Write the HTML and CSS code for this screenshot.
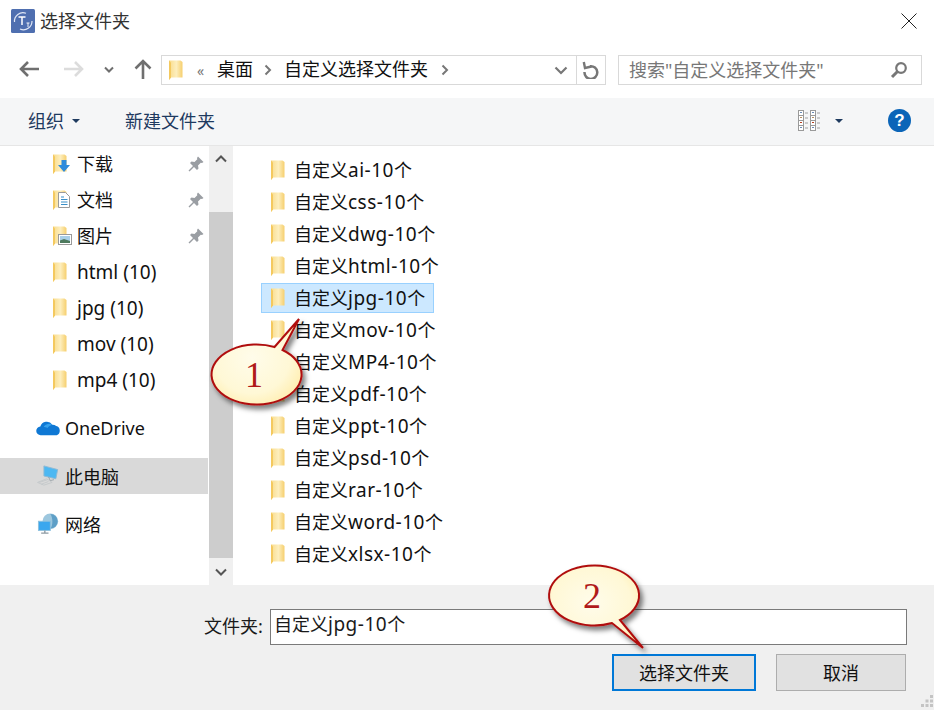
FILE: index.html
```html
<!DOCTYPE html>
<html lang="zh-CN">
<head>
<meta charset="utf-8">
<title>选择文件夹</title>
<link rel="stylesheet" href="styles.css">
</head>
<body>
<svg class="defs" width="0" height="0">
  <defs>
    <linearGradient id="fg" x1="0" x2="1" y1="0" y2="0">
      <stop offset="0" stop-color="#f9dc8c"/><stop offset=".55" stop-color="#fdeebd"/><stop offset="1" stop-color="#f6cf6e"/>
    </linearGradient>
    <radialGradient id="bubble" cx=".45" cy=".45" r=".6">
      <stop offset="0" stop-color="#fffcea"/><stop offset=".7" stop-color="#fff8d6"/><stop offset="1" stop-color="#ffefb4"/>
    </radialGradient>
    <filter id="sh" x="-20%" y="-20%" width="150%" height="150%"><feDropShadow dx="3" dy="4" stdDeviation="2.500" flood-color="#000" flood-opacity=".5"/></filter>
    <symbol id="folder" viewBox="0 0 16 22">
      <path d="M1 1.500h11.500l2 1.500v15.500l-11.500 0-2 2.500z" fill="url(#fg)"/>
      <path d="M1 1.500v19.500l2-2.500v-15z" fill="#f4c95f"/>
    </symbol>
    <symbol id="pin" viewBox="0 0 16 16">
      <path d="M10 .5L15.500 6 14 7l-1.200-.3L10 9.500l.5 3L9 14l-3-3-4.500 4.500-1-1L5 10 2 7l1.500-1.500 3 .5 2.800-2.800L9 2z" fill="#9a9ea3"/>
    </symbol>
  </defs>
</svg>
<div class="dialog">
  <header class="titlebar">
    <div class="title-left">
      <svg class="app-icon" viewBox="0 0 24 24"><rect width="24" height="24" rx="1.500" fill="#4f6fb0"/><path d="M3.500 13A8.500 8.500 0 0 1 15 4.300" fill="none" stroke="#dfe6f5" stroke-width="1.200"/><path d="M21 12a8.500 8.500 0 0 1-12 8" fill="none" stroke="#dfe6f5" stroke-width="1.200"/><path d="M7.500 8h7M11 8v8" stroke="#fff" stroke-width="1.500" fill="none"/><path d="M15.500 14h3M17 14v4" stroke="#fff" stroke-width=".9" fill="none"/></svg>
      <span class="title-text">选择文件夹</span>
    </div>
    <svg class="close" viewBox="0 0 16 16"><path d="M.5.5l15 15M15.500.5l-15 15" stroke="#222" stroke-width="1" fill="none"/></svg>
  </header>

  <nav class="navbar">
    <div class="nav-buttons">
      <svg class="nav-arrow" viewBox="0 0 20 18"><path d="M9 2L2 9l7 7M2 9h18" fill="none" stroke="#6f6f6f" stroke-width="2.600"/></svg>
      <svg class="nav-arrow fwd" viewBox="0 0 20 18"><path d="M11 2l7 7-7 7M18 9H0" fill="none" stroke="#dcdcdc" stroke-width="2.600"/></svg>
      <svg class="nav-chev" viewBox="0 0 10 7"><path d="M1 1.500l4 4 4-4" fill="none" stroke="#6f6f6f" stroke-width="2"/></svg>
      <svg class="nav-up" viewBox="0 0 18 20"><path d="M1.500 9.500L9 2l7.500 7.500M9 2v18" fill="none" stroke="#6f6f6f" stroke-width="2.600"/></svg>
    </div>
    <div class="address">
      <svg class="addr-folder"><use href="#folder"/></svg>
      <span class="crumb-more">«</span>
      <span class="crumb first">桌面</span>
      <svg class="crumb-sep" viewBox="0 0 8 12"><path d="M1.500 1.500L6 6l-4.500 4.500" fill="none" stroke="#777" stroke-width="2"/></svg>
      <span class="crumb">自定义选择文件夹</span>
      <svg class="crumb-sep last" viewBox="0 0 8 12"><path d="M1.500 1.500L6 6l-4.500 4.500" fill="none" stroke="#777" stroke-width="2"/></svg>
      <span class="spacer"></span>
      <svg class="addr-chev" viewBox="0 0 14 9"><path d="M1.500 1.500L7 7l5.500-5.500" fill="none" stroke="#777" stroke-width="2.200"/></svg>
      <span class="refresh">
        <svg viewBox="0 0 18 18"><path d="M8 5.200A6.400 6.400 0 1 1 2.500 11" fill="none" stroke="#777" stroke-width="2.500"/><path d="M1.800 1l1.200 6 6.500-1.500" fill="none" stroke="#777" stroke-width="2.400"/></svg>
      </span>
    </div>
    <div class="search">
      <span class="search-text">搜索"自定义选择文件夹"</span>
      <svg class="search-icon" viewBox="0 0 18 18"><circle cx="11" cy="7" r="4.800" fill="none" stroke="#777" stroke-width="2.200"/><path d="M7.500 10.500L2 16" stroke="#777" stroke-width="3"/></svg>
    </div>
  </nav>

  <div class="toolbar">
    <span class="tool">组织</span><span class="caret"></span>
    <span class="tool new">新建文件夹</span>
    <span class="spacer"></span>
    <svg class="view-icon" viewBox="0 0 24 22">
      <g fill="#fff" stroke="#9a9a9a"><rect x=".5" y=".5" width="5" height="5"/><rect x=".5" y="5.500" width="5" height="5"/><rect x=".5" y="10.500" width="5" height="5"/><rect x=".5" y="15.500" width="5" height="5"/><rect x="12.500" y=".5" width="5" height="5"/><rect x="12.500" y="5.500" width="5" height="5"/><rect x="12.500" y="10.500" width="5" height="5"/><rect x="12.500" y="15.500" width="5" height="5"/></g>
      <path d="M2 2.500h2M14 2.500h2M2 17.500h2M14 17.500h2" stroke="#6a8bb5"/><path d="M2 7.500h2M14 7.500h2" stroke="#b89060"/><path d="M2 12.500h2M14 12.500h2" stroke="#b84020"/>
      <path d="M7 3h3M7 8h3M7 13h3M7 18h3M19 3h3M19 8h3M19 13h3M19 18h3" stroke="#a0a0a0"/>
    </svg>
    <span class="caret view"></span>
    <span class="help">?</span>
  </div>

  <main class="content">
    <aside class="sidebar">
      <ul class="quick">
        <li class="side-row"><span class="side-ic"><svg class="f"><use href="#folder"/></svg><svg class="badge" viewBox="0 0 12 12"><path d="M3.500 0h5v5H12L6 12 0 5h3.500z" fill="#2f8bdc"/></svg></span><span class="side-label">下载</span><svg class="pin"><use href="#pin"/></svg></li>
        <li class="side-row"><span class="side-ic"><svg class="f"><use href="#folder"/></svg><svg class="badge doc" viewBox="0 0 12 16"><path d="M.5.500h7l4 4v11H.5z" fill="#fff" stroke="#9a9a9a"/><path d="M3 5h3M3 7.500h6.500M3 10h6.500M3 12.500h6.500" stroke="#3a8fc7"/></svg></span><span class="side-label">文档</span><svg class="pin"><use href="#pin"/></svg></li>
        <li class="side-row"><span class="side-ic"><svg class="f"><use href="#folder"/></svg><svg class="badge pic" viewBox="0 0 14 11"><rect x=".5" y=".5" width="13" height="10" fill="#fff" stroke="#9a9a9a"/><rect x="2" y="2" width="10" height="7" fill="#a9cfe8"/><path d="M2 9V6.500l4-1.500 6 2v2z" fill="#4e7a5e"/></svg></span><span class="side-label">图片</span><svg class="pin"><use href="#pin"/></svg></li>
        <li class="side-row"><span class="side-ic"><svg class="f"><use href="#folder"/></svg></span><span class="side-label latin">html (10)</span></li>
        <li class="side-row"><span class="side-ic"><svg class="f"><use href="#folder"/></svg></span><span class="side-label latin">jpg (10)</span></li>
        <li class="side-row"><span class="side-ic"><svg class="f"><use href="#folder"/></svg></span><span class="side-label latin">mov (10)</span></li>
        <li class="side-row"><span class="side-ic"><svg class="f"><use href="#folder"/></svg></span><span class="side-label latin">mp4 (10)</span></li>
      </ul>
      <ul class="roots">
        <li class="root-row"><svg class="root-ic" viewBox="0 0 26 18"><path d="M5 16.500a4.500 4.500 0 0 1-.5-9A7 7 0 0 1 17 5.500a5.500 5.500 0 0 1 4 1.500 5 5 0 0 1 .5 9.500z" fill="#0f78d4"/><path d="M8 7.500A7 7 0 0 1 17 5.500c-3 1-4 2-5 3.500-1.500-.5-3-.8-4-1.500z" fill="#37a2ec"/></svg><span>OneDrive</span></li>
        <li class="root-row active"><svg class="root-ic" viewBox="0 0 26 24"><path d="M8 1l15 4-2 10-13-3z" fill="#4db8f2" stroke="#8fb9d3"/><path d="M1 19l10-4 6 4-9 3z" fill="none" stroke="#c4c8cb"/><path d="M3 19l9-3M5 21l8-3" stroke="#c4c8cb"/><path d="M13 13l2 4 4-1" fill="none" stroke="#9aa3a9"/></svg><span>此电脑</span></li>
        <li class="root-row"><svg class="root-ic" viewBox="0 0 26 24"><circle cx="15" cy="9" r="8.500" fill="#9dc7de"/><path d="M15 1a8 8 0 0 1 0 16c3-3 3-12 0-16z" fill="#5e9fc7"/><rect x="2" y="9" width="13" height="10" fill="#3ba7ee" stroke="#8cc0dd"/><path d="M5 22h8M9 19v3" stroke="#8d9aa3" stroke-width="1.500"/></svg><span>网络</span></li>
      </ul>
    </aside>
    <div class="scrollbar">
      <span class="sb-btn"><svg viewBox="0 0 12 8"><path d="M1 6.500l5-5 5 5" fill="none" stroke="#555" stroke-width="2"/></svg></span>
      <span class="sb-thumb"></span>
      <span class="sb-btn"><svg viewBox="0 0 12 8"><path d="M1 1.500l5 5 5-5" fill="none" stroke="#555" stroke-width="2"/></svg></span>
    </div>
    <ul class="files">
      <li class="file"><svg class="f"><use href="#folder"/></svg><span>自定义<span class="lat">ai-10</span>个</span></li>
      <li class="file"><svg class="f"><use href="#folder"/></svg><span>自定义<span class="lat">css-10</span>个</span></li>
      <li class="file"><svg class="f"><use href="#folder"/></svg><span>自定义<span class="lat">dwg-10</span>个</span></li>
      <li class="file"><svg class="f"><use href="#folder"/></svg><span>自定义<span class="lat">html-10</span>个</span></li>
      <li class="file selected"><svg class="f"><use href="#folder"/></svg><span>自定义<span class="lat">jpg-10</span>个</span></li>
      <li class="file"><svg class="f"><use href="#folder"/></svg><span>自定义<span class="lat">mov-10</span>个</span></li>
      <li class="file"><svg class="f"><use href="#folder"/></svg><span>自定义<span class="lat">MP4-10</span>个</span></li>
      <li class="file"><svg class="f"><use href="#folder"/></svg><span>自定义<span class="lat">pdf-10</span>个</span></li>
      <li class="file"><svg class="f"><use href="#folder"/></svg><span>自定义<span class="lat">ppt-10</span>个</span></li>
      <li class="file"><svg class="f"><use href="#folder"/></svg><span>自定义<span class="lat">psd-10</span>个</span></li>
      <li class="file"><svg class="f"><use href="#folder"/></svg><span>自定义<span class="lat">rar-10</span>个</span></li>
      <li class="file"><svg class="f"><use href="#folder"/></svg><span>自定义<span class="lat">word-10</span>个</span></li>
      <li class="file"><svg class="f"><use href="#folder"/></svg><span>自定义<span class="lat">xlsx-10</span>个</span></li>
    </ul>
  </main>

  <footer class="footer">
    <div class="name-row">
      <span class="name-label">文件夹:</span>
      <div class="name-input">自定义<span class="lat">jpg-10</span>个</div>
    </div>
    <div class="btn-row">
      <button class="btn primary">选择文件夹</button>
      <button class="btn">取消</button>
    </div>
    <svg class="grip" viewBox="0 0 14 14"><path d="M10 1h3v3h-3zM5.500 5.500h3v3h-3zM10 5.500h3v3h-3zM1 10h3v3H1zM5.500 10h3v3h-3zM10 10h3v3h-3z" fill="#c4c4c4"/></svg>
  </footer>

  <svg class="callout one" viewBox="0 0 120 120">
    <path d="M64.500 30L89 2 72.500 33A45 30 0 1 1 64.500 30z" fill="url(#bubble)" stroke="#b01010" stroke-width="2" filter="url(#sh)"/>
    <text x="35" y="70" class="callout-num">1</text>
  </svg>
  <svg class="callout two" viewBox="0 0 120 110">
    <path d="M72 54L95 82 64 57A45 30 0 1 1 72 54z" fill="url(#bubble)" stroke="#b01010" stroke-width="2" filter="url(#sh)"/>
    <text x="35" y="42" class="callout-num">2</text>
  </svg>
</div>
</body>
</html>
```

FILE: styles.css
```css
* { box-sizing: border-box; }
html, body { margin: 0; padding: 0; }
body {
  width: 934px; height: 710px; overflow: hidden; background: #fff;
  font-family: "Noto Sans", "Noto Sans CJK SC", sans-serif; font-size: 18px; color: #1a1a1a;
}
ul { list-style: none; margin: 0; padding: 0; }
.defs { position: absolute; }
.dialog { position: relative; width: 934px; height: 710px; display: flex; flex-direction: column; }
.spacer { flex: 1; }
.lat { font-size: 19px; letter-spacing: .5px; }
.latin { font-size: 19px; }

.titlebar { height: 44px; display: flex; align-items: center; justify-content: space-between; padding: 0 17px 2px 11px; }
.title-left { display: flex; align-items: center; gap: 5px; }
.app-icon { width: 24px; height: 24px; }
.title-text { line-height: 24px; color: #333; }
.close { width: 16px; height: 16px; }

.navbar { height: 54px; display: flex; align-items: center; padding: 0 12px 2px 0; }
.nav-buttons { width: 161px; display: flex; align-items: center; padding: 0 0 2px 19px; }
.nav-arrow { width: 20px; height: 18px; }
.nav-arrow.fwd { margin-left: 25px; }
.nav-chev { width: 10px; height: 7px; margin-left: 20px; }
.nav-up { width: 18px; height: 20px; margin-left: 20px; }
.address { width: 445px; height: 30px; border: 1px solid #d9d9d9; display: flex; align-items: center; padding-left: 6px; }
.addr-folder { width: 16px; height: 22px; }
.crumb-more { margin-left: 13px; font-size: 14px; color: #777; width: 16px; }
.crumb { margin-left: 12px; color: #111; line-height: 24px; padding-bottom: 2px; }
.crumb.first { margin-left: 4px; }
.crumb-sep { width: 8px; height: 12px; margin-left: 11px; }
.crumb-sep.last { margin-left: 13px; }
.addr-chev { width: 14px; height: 9px; margin-right: 8px; }
.refresh { width: 29px; height: 28px; border-left: 1px solid #d9d9d9; display: flex; align-items: center; justify-content: center; }
.refresh svg { width: 18px; height: 18px; }
.search { width: 304px; height: 30px; margin-left: 12px; border: 1px solid #d9d9d9; display: flex; align-items: center; justify-content: space-between; padding: 0 13px 0 10px; }
.search-text { color: #777; line-height: 24px; }
.search-icon { width: 18px; height: 18px; }

.toolbar { height: 48px; background: #f5f6f7; border-bottom: 1px solid #e6e6e6; display: flex; align-items: center; padding: 0 23px 2px 28px; }
.tool { color: #1e3a5f; line-height: 24px; }
.tool.new { margin-left: 45px; }
.caret { width: 0; height: 0; border: 4px solid transparent; border-top: 4px solid #1e3a5f; border-bottom: 0; margin-left: 8px; }
.caret.view { margin-left: 13px; margin-right: 45px; }
.view-icon { width: 24px; height: 22px; }
.help { width: 23px; height: 23px; border-radius: 50%; background: #0b65b8; color: #fff; font: bold 17px/23px "Liberation Sans", sans-serif; text-align: center; }

.content { height: 439px; display: flex; }
.sidebar { width: 209px; }
.side-row { height: 36px; display: flex; align-items: center; padding-left: 52px; position: relative; }
.side-ic { position: relative; width: 25px; height: 22px; flex: none; }
.f { width: 16px; height: 22px; display: block; flex: none; }
.badge { position: absolute; left: 6px; top: 7px; width: 12px; height: 12px; }
.badge.doc { top: 3px; height: 16px; }
.badge.pic { width: 14px; height: 11px; top: 9px; }
.side-label { flex: 1; line-height: 24px; color: #111; }
.pin { width: 16px; height: 16px; margin-right: 5px; }
.roots { padding-top: 12px; }
.root-row { width: 208px; height: 36px; margin-bottom: 12px; display: flex; align-items: center; padding-left: 36px; gap: 4px; color: #111; }
.root-row.active { background: #d9d9d9; }
.root-ic { width: 25px; height: 22px; flex: none; }
.scrollbar { width: 24px; background: #f0f0f0; display: flex; flex-direction: column; }
.sb-btn { height: 27px; flex: none; display: flex; align-items: center; justify-content: center; }
.sb-btn:first-child { height: 66px; padding-bottom: 40px; }
.sb-btn svg { width: 12px; height: 8px; }
.sb-thumb { flex: 1; background: #cdcdcd; }
.files { flex: 1; padding: 8px 0 0 28px; }
.file { width: 173px; height: 32px; display: flex; align-items: center; gap: 8px; padding-left: 9px; white-space: nowrap; color: #111; }
.file.selected { background: #cce8ff; border: 1px solid #99d1ff; padding-left: 8px; height: 30px; margin: 1px 0; }
.file > span { line-height: 24px; }

.footer { flex: 1; background: #f0f0f0; position: relative; padding: 24px 27px 0 0; }
.name-row { display: flex; align-items: center; padding-left: 204px; }
.name-label { width: 66px; line-height: 24px; padding-bottom: 2px; }
.name-input { flex: 1; height: 36px; background: #fff; border: 1px solid #7a7a7a; padding: 0 3px; line-height: 28px; }
.btn-row { display: flex; justify-content: flex-end; gap: 20px; margin: 9px 1px 0 0; }
.btn { width: 130px; height: 37px; background: #e1e1e1; border: 1px solid #adadad; font: inherit; color: #111; padding: 0 0 2px; }
.btn.primary { width: 144px; border: 2px solid #0078d7; }
.grip { position: absolute; right: 0; bottom: 2px; width: 14px; height: 14px; }

.callout { position: absolute; overflow: visible; }
.callout.one { left: 210px; top: 317px; width: 120px; height: 120px; }
.callout.two { left: 548px; top: 566px; width: 120px; height: 110px; }
.callout-num { font-family: "Liberation Serif", serif; font-size: 36px; fill: #b01a1a; }
```
